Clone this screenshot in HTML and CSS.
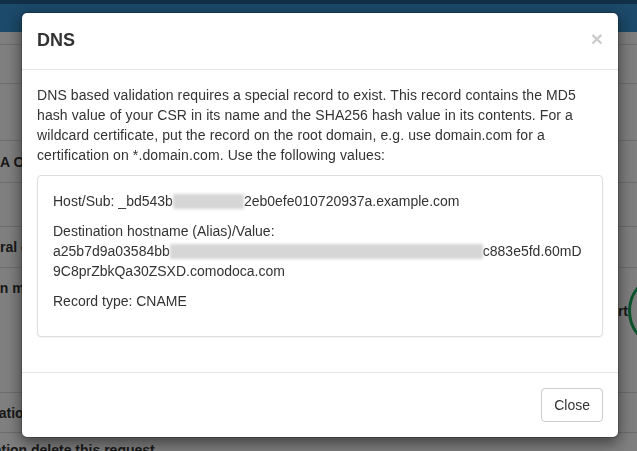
FILE: index.html
```html
<!DOCTYPE html>
<html lang="en">
<head>
<meta charset="utf-8">
<title>DNS</title>
<link rel="stylesheet" href="styles.css">
</head>
<body>
  <div class="page">
    <header class="navbar"></header>
    <div class="rows">
      <div class="row row-a"></div>
      <div class="row row-b"></div>
      <div class="row row-c"><span class="label shift-c">CA Options</span></div>
      <div class="row row-d"></div>
      <div class="row row-e"><span class="label shift-e">General contact</span></div>
      <div class="row row-f">
        <span class="label shift-f">Domain management</span>
        <div class="status">
          <span class="status-text">Start</span>
          <span class="ring"></span>
        </div>
      </div>
      <div class="row row-g"><span class="label shift-g">Validation</span></div>
      <div class="row row-h"><span class="note shift-h">Validation delete this request</span></div>
    </div>
  </div>

  <div class="backdrop"></div>

  <div class="modal" role="dialog" aria-labelledby="modal-title">
    <div class="modal-header">
      <h4 class="modal-title" id="modal-title">DNS</h4>
      <button class="close" type="button" aria-label="Close">×</button>
    </div>
    <div class="modal-body">
      <p class="intro">DNS based validation requires a special record to exist. This record contains the MD5<br>hash value of your CSR in its name and the SHA256 hash value in its contents. For a<br>wildcard certificate, put the record on the root domain, e.g. use domain.com for a<br>certification on *.domain.com. Use the following values:</p>
      <div class="panel">
        <p>Host/Sub: _bd543b<span class="redact redact-short"></span>2eb0efe010720937a.example.com</p>
        <p>Destination hostname (Alias)/Value:<br>a25b7d9a03584bb<span class="redact redact-long"></span>c883e5fd.60mD<br>9C8prZbkQa30ZSXD.comodoca.com</p>
        <p>Record type: CNAME</p>
      </div>
    </div>
    <div class="modal-footer">
      <button class="btn" type="button">Close</button>
    </div>
  </div>
</body>
</html>
```

FILE: styles.css
```css
html, body {
  margin: 0;
  padding: 0;
}

body {
  width: 637px;
  height: 451px;
  overflow: hidden;
  font-family: "Liberation Sans", Arial, Helvetica, sans-serif;
  font-size: 14px;
  line-height: 20px;
  color: #333;
  background: #fff;
}

/* ---------- underlying page ---------- */
.page {
  height: 451px;
  overflow: hidden;
}

.navbar {
  height: 32px;
  background: linear-gradient(#22608e 0, #22608e 4px, #3794d4 4px, #3794d4 100%);
}

.rows {
  margin-top: 12px;
  display: grid;
  grid-template-rows: 39px 57px 42px 44px 41px 125px 40px 40px;
}

.row {
  box-sizing: border-box;
  border-top: 1px solid #dcdcdc;
  display: flex;
  align-items: center;
  overflow: hidden;
}

.label {
  font-weight: bold;
  white-space: nowrap;
}

.note {
  white-space: nowrap;
  font-weight: 600;
}

.shift-c { margin-left: -10px; }
.shift-e { margin-left: -35px; }
.shift-f { margin-left: -43px; }
.shift-g { margin-left: -34px; }
.shift-h { margin-left: -39px; }

.row-f {
  align-items: flex-start;
  justify-content: space-between;
}

.row-f .label {
  margin-top: 10px;
}

.row-h {
  align-items: flex-start;
}

.row-h .note {
  margin-top: 7px;
}

.status {
  display: flex;
  align-items: center;
  gap: 0;
  margin-top: 5px;
  margin-right: -67px;
}

.status-text {
  font-weight: bold;
}

.ring {
  box-sizing: border-box;
  width: 76px;
  height: 76px;
  border: 3px solid #17a85a;
  border-radius: 50%;
}

/* ---------- overlay ---------- */
.backdrop {
  position: fixed;
  inset: 0;
  background: rgba(0, 0, 0, 0.5);
}

.modal {
  position: fixed;
  top: 12px;
  left: 21px;
  width: 598px;
  box-sizing: border-box;
  background: #fff;
  border: 1px solid rgba(0, 0, 0, 0.2);
  border-radius: 6px;
  box-shadow: 0 5px 15px rgba(0, 0, 0, 0.5);
  background-clip: padding-box;
}

.modal-header {
  display: flex;
  justify-content: space-between;
  align-items: flex-start;
  padding: 15px;
  border-bottom: 1px solid #e5e5e5;
}

.modal-title {
  margin: 0;
  font-size: 18px;
  line-height: 25.7px;
  font-weight: bold;
  color: #333;
}

.close {
  margin-top: 0;
  padding: 0;
  border: 0;
  background: transparent;
  font-family: inherit;
  font-size: 21px;
  font-weight: bold;
  line-height: 1;
  color: #000;
  opacity: 0.2;
  text-shadow: 0 1px 0 #fff;
  cursor: pointer;
}

.modal-body {
  padding: 15px;
}

.modal-body p {
  margin: 0 0 10px;
}

.intro {
  white-space: nowrap;
  letter-spacing: 0.1px;
}

.panel {
  margin-bottom: 20px;
  padding: 15px;
  border: 1px solid #ddd;
  border-radius: 4px;
  box-shadow: 0 1px 1px rgba(0, 0, 0, 0.05);
  background: #fff;
}

.redact {
  display: inline-block;
  height: 15px;
  vertical-align: -3px;
  background: #d6d6d6;
  filter: blur(1.5px);
}

.redact-short { width: 71px; }
.redact-long { width: 313px; }

.modal-footer {
  display: flex;
  justify-content: flex-end;
  padding: 15px;
  border-top: 1px solid #e5e5e5;
}

.btn {
  padding: 6px 12px;
  font-family: inherit;
  font-size: 14px;
  line-height: 20px;
  color: #333;
  background: #fff;
  border: 1px solid #ccc;
  border-radius: 4px;
  cursor: pointer;
}
```
